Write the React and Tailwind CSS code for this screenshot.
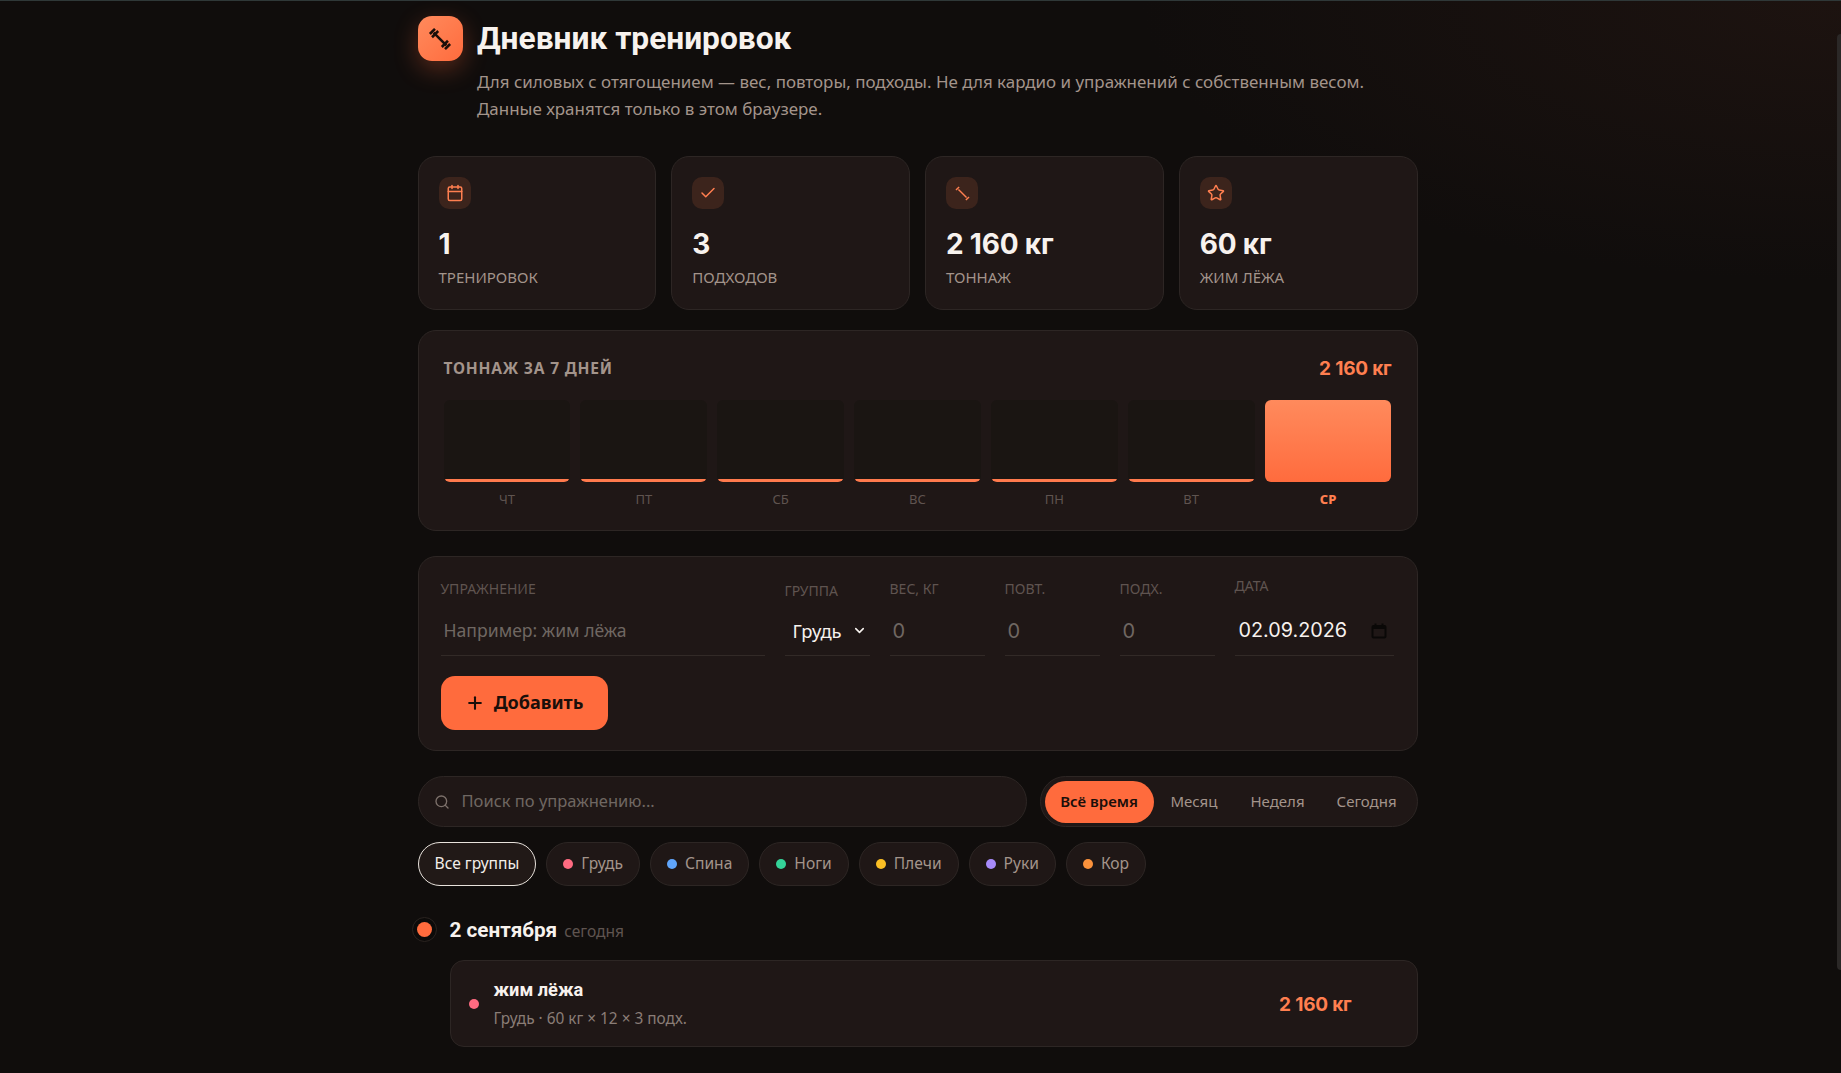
import React from "react";
import { Calendar, Check, Star, Search, Plus, ChevronDown } from "lucide-react";

const bodyFont = "font-['Noto_Sans','Open_Sans',sans-serif]";
const numFont = "font-['Inter','Lato',sans-serif]";

function Dumbbell({ className, heavy }) {
  return (
    <svg viewBox="0 0 24 24" fill="none" stroke="currentColor" strokeWidth={heavy ? 2.4 : 2} strokeLinecap="square" className={className}>
      <path d="M7 7 L17 17" />
      <path d="M3.5 6.5 L6.5 3.5" />
      {heavy && <path d="M5.5 9.5 L9.5 5.5" />}
      <path d="M17.5 20.5 L20.5 17.5" />
      {heavy && <path d="M14.5 18.5 L18.5 14.5" />}
    </svg>
  );
}

function Stat({ icon, value, label }) {
  return (
    <div className="h-[154px] rounded-[18px] border border-[#2d2624] bg-[#1f1716] px-[20px] pt-5">
      <div className="flex h-8 w-8 items-center justify-center rounded-[10px] bg-[#3c241c] text-[#ff7f50]">{icon}</div>
      <div className={`mt-[17px] h-[36px] text-[28px] font-bold leading-[36px] tracking-[-0.2px] text-[#f7f2ee] ${numFont}`}>{value}</div>
      <div className="mt-[5px] text-[15px] leading-[20px] uppercase text-[#a3948b]">{label}</div>
    </div>
  );
}

function Bar({ label, active }) {
  return (
    <div className="flex flex-col items-stretch">
      <div className="relative h-[82px] overflow-hidden rounded-md bg-[#1a1512]">
        {active ? (
          <div className="absolute inset-0 bg-gradient-to-b from-[#ff8a5c] to-[#ff6b3d]" />
        ) : (
          <div className="absolute inset-x-0 bottom-0 h-[3px] rounded-b-md bg-[#ff7a4d]" />
        )}
      </div>
      <div className={`mt-[9px] text-center text-[13px] leading-[17px] ${active ? "font-extrabold text-[#ff7f50]" : "text-[#5f5450]"}`}>{label}</div>
    </div>
  );
}

function Field({ label, className, labelClass = "mb-[10px]", children }) {
  return (
    <div className={`flex flex-col ${className}`}>
      <div className={`text-[14px] leading-[18px] uppercase text-[#5f5450] ${labelClass}`}>{label}</div>
      <div className="flex h-[48px] items-center border-b border-[#322a27] pb-[2px]">{children}</div>
    </div>
  );
}

function Chip({ dot, label, active }) {
  return (
    <div className={`flex h-11 items-center gap-[8px] rounded-full border px-4 text-[15.6px] ${active ? "border-[#e8e2dc] bg-[#211917] text-[#f3eee9]" : "border-[#2d2624] bg-[#1f1716] text-[#a3948b]"}`}>
      {dot && <span className={`h-2.5 w-2.5 rounded-full ${dot}`} />}
      {label}
    </div>
  );
}

export default function App() {
  const ph = "text-[17.6px] text-[#6f6762]";
  const zero = `pl-[3px] ${numFont} text-[20px] text-[#6f6762]`;
  return (
    <div className={`relative h-[1073px] overflow-hidden border-t border-[#2f3838] bg-[#100d0c] bg-[radial-gradient(ellipse_700px_280px_at_100%_0%,#1d1310,transparent)] pr-[6px] ${bodyFont}`}>
      <div className="mx-auto w-[1000px] pt-[15px]">
        <header className="flex gap-[14.5px]">
          <div className="flex h-[45px] w-[45px] shrink-0 items-center justify-center rounded-[14px] bg-gradient-to-br from-[#ff8a5c] to-[#ff6b3d] text-[#1a0f0a] shadow-[0_8px_24px_rgba(255,107,61,0.3)]">
            <Dumbbell heavy className="h-[26px] w-[26px]" />
          </div>
          <div className="pt-[1px]">
            <h1 className="font-['Roboto',sans-serif] text-[31.7px] font-bold leading-[44px] text-[#f7f2ee]">Дневник тренировок</h1>
            <p className="mt-[7px] text-[16.95px] leading-[27px] text-[#a3948b]">
              Для силовых с отягощением — вес, повторы, подходы. Не для кардио и упражнений с собственным весом.
              <br />
              Данные хранятся только в этом браузере.
            </p>
          </div>
        </header>

        <section className="mt-[34px] grid grid-cols-4 gap-[15px]">
          <Stat icon={<Calendar className="h-[18px] w-[18px]" strokeWidth={2} />} value="1" label="Тренировок" />
          <Stat icon={<Check className="h-[18px] w-[18px]" strokeWidth={2} />} value="3" label="Подходов" />
          <Stat icon={<Dumbbell className="h-[17px] w-[17px]" />} value="2 160 кг" label="Тоннаж" />
          <Stat icon={<Star className="h-[18px] w-[18px]" strokeWidth={2} />} value="60 кг" label="Жим лёжа" />
        </section>

        <section className="mt-[20px] h-[201px] rounded-[18px] border border-[#2d2624] bg-[#1f1716] px-[25px] pt-[25px]">
          <div className="flex h-[26px] items-center justify-between">
            <span className="text-[15.5px] font-bold uppercase tracking-[0.8px] text-[#a3948b]">Тоннаж за 7 дней</span>
            <span className={`text-[19px] font-bold tracking-[-0.2px] text-[#ff7f50] ${numFont}`}>2 160 кг</span>
          </div>
          <div className="mt-[18px] grid grid-cols-7 gap-2.5">
            {["ЧТ", "ПТ", "СБ", "ВС", "ПН", "ВТ"].map((d) => (
              <Bar key={d} label={d} />
            ))}
            <Bar label="СР" active />
          </div>
        </section>

        <section className="mt-[25px] h-[195px] rounded-[18px] border border-[#2d2624] bg-[#1f1716] px-[22px] pt-[23px]">
          <div className="flex gap-5">
            <Field label="Упражнение" className="w-[324px]">
              <span className={`pl-[3px] ${ph}`}>Например: жим лёжа</span>
            </Field>
            <Field label="Группа" className="w-[85px]" labelClass="mt-[2px] mb-[8px]">
              <span className="pl-[8px] text-[18.4px] text-[#f7f2ee]">Грудь</span>
              <ChevronDown className="ml-[10px] h-[15px] w-[15px] text-[#f7f2ee]" strokeWidth={2.5} />
            </Field>
            <Field label="Вес, кг" className="w-[95px]">
              <span className={zero}>0</span>
            </Field>
            <Field label="Повт." className="w-[95px]">
              <span className={zero}>0</span>
            </Field>
            <Field label="Подх." className="w-[95px]">
              <span className={zero}>0</span>
            </Field>
            <Field label="Дата" className="w-[159px]" labelClass="-mt-[3px] mb-[13px]">
              <span className={`pl-[4px] text-[19.8px] text-[#f7f2ee] ${numFont}`}>02.09.2026</span>
              <svg viewBox="0 0 16 16" className="ml-auto mr-[7px] h-[16px] w-[16px] text-[#0a0807]" fill="none" stroke="currentColor" strokeWidth="2">
                <rect x="1.5" y="3" width="13" height="11.5" rx="1" />
                <path d="M4.5 0.5v3M11.5 0.5v3M1.5 5h13" />
              </svg>
            </Field>
          </div>
          <button className="mt-[20px] flex h-[54px] w-[167px] items-center justify-center gap-[9px] rounded-[14px] bg-[#ff6b3d] pb-[1px] text-[18px] font-bold text-[#1a0f0a]">
            <Plus className="h-[20px] w-[20px]" strokeWidth={2.5} />
            Добавить
          </button>
        </section>

        <section className="mt-[25px] flex gap-[13px]">
          <div className="flex h-[51px] flex-1 items-center gap-[12px] rounded-full border border-[#2d2624] bg-[#1f1716] pl-[15px]">
            <Search className="h-[16px] w-[16px] text-[#7d716b]" strokeWidth={2} />
            <span className="text-[16.5px] text-[#6f6762]">Поиск по упражнению...</span>
          </div>
          <div className="flex h-[51px] w-[378px] items-center rounded-full border border-[#2d2624] bg-[#1f1716] pl-[4px] text-[15px] text-[#a3948b]">
            <span className="flex h-[42px] w-[109px] items-center justify-center rounded-full bg-[#ff6b3d] font-semibold text-[#1a0f0a]">Всё время</span>
            <span className="ml-[17px]">Месяц</span>
            <span className="ml-[33px]">Неделя</span>
            <span className="ml-[32px]">Сегодня</span>
          </div>
        </section>

        <section className="mt-[15px] flex gap-2.5">
          <Chip label="Все группы" active />
          <Chip dot="bg-[#ff6b81]" label="Грудь" />
          <Chip dot="bg-[#60a5fa]" label="Спина" />
          <Chip dot="bg-[#34d399]" label="Ноги" />
          <Chip dot="bg-[#fbbf24]" label="Плечи" />
          <Chip dot="bg-[#a78bfa]" label="Руки" />
          <Chip dot="bg-[#fb923c]" label="Кор" />
        </section>

        <div className="mt-[30px] flex h-[30px] items-center">
          <span className="-ml-[6px] -mt-[3px] flex h-[25px] w-[25px] items-center justify-center rounded-full border border-[#2a2320] bg-[#0c0a09]">
            <span className="h-[15px] w-[15px] rounded-full bg-[#ff6b3d]" />
          </span>
          <span className="ml-[13px] font-['Roboto',sans-serif] text-[20.7px] font-bold text-[#f7f2ee]">2 сентября</span>
          <span className="ml-[7px] mt-[2px] text-[15.6px] text-[#5f5450]">сегодня</span>
        </div>

        <div className="ml-[32px] mt-[14px] flex h-[87px] items-center rounded-[14px] border border-[#2d2624] bg-[#1f1716] pl-[18px]">
          <span className="h-2.5 w-2.5 rounded-full bg-[#ff6b81]" />
          <div className="ml-[15px] flex-1">
            <div className="font-['Roboto',sans-serif] text-[18.2px] font-bold leading-[24px] text-[#f7f2ee]">жим лёжа</div>
            <div className="mt-[7px] text-[15.4px] leading-[20px] text-[#8a7d76]">Грудь · 60 кг × 12 × 3 подх.</div>
          </div>
          <span className={`mr-[65px] mt-[3px] text-[19px] font-bold tracking-[-0.2px] text-[#ff7f50] ${numFont}`}>2 160 кг</span>
        </div>
      </div>
      <div className="absolute right-0 top-[33px] h-[936px] w-[4px] rounded-l-full bg-[#2b2827]" />
    </div>
  );
}
